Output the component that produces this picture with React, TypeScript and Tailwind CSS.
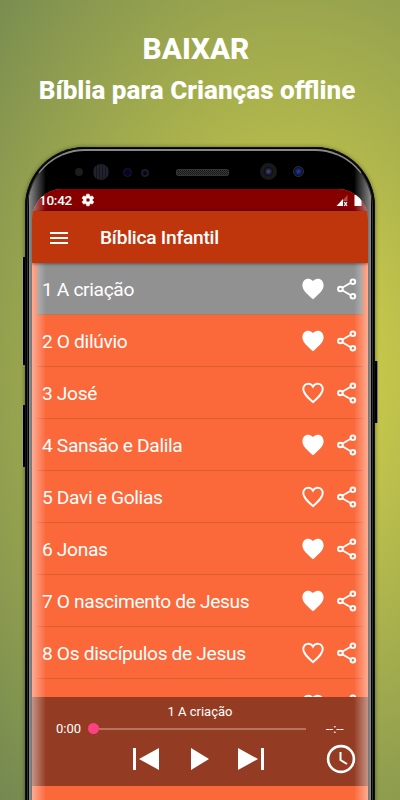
import { useState } from "react";

const stories = [
  { id: 1, title: "A criação", liked: true },
  { id: 2, title: "O dilúvio", liked: true },
  { id: 3, title: "José", liked: false },
  { id: 4, title: "Sansão e Dalila", liked: true },
  { id: 5, title: "Davi e Golias", liked: false },
  { id: 6, title: "Jonas", liked: true },
  { id: 7, title: "O nascimento de Jesus", liked: true },
  { id: 8, title: "Os discípulos de Jesus", liked: false },
  { id: 9, title: "", liked: false },
];

const HeartIcon = ({ filled }: { filled: boolean }) => (
  <svg width="22" height="22" viewBox="0 0 22 22" className="shrink-0">
    {filled ? (
      <path
        d="M11 21.300 9.400 19.900C3.600 14.700.4 11.700.4 7.300.4 3.400 3 .7 6.200.7c1.900 0 3.700.9 4.800 2.400C12.100 1.600 13.900.7 15.800.7c3.200 0 5.800 2.700 5.800 6.600 0 4.400-3.200 7.400-9 12.600L11 21.300z"
        fill="#fff"
      />
    ) : (
      <path
        d="M11 20.100 10 19.200C4.600 14.300 1.300 11.200 1.300 7.300c0-3.400 2.200-5.600 5-5.600 2 0 3.700 1 4.700 3 1-2 2.700-3 4.700-3 2.800 0 5 2.200 5 5.600 0 3.900-3.300 7-8.700 11.900L11 20.100z"
        fill="none"
        stroke="#fff"
        strokeWidth="1.900"
      />
    )}
  </svg>
);

const ShareIcon = () => (
  <svg width="20" height="22" viewBox="0 0 20 22" className="shrink-0" fill="none" stroke="#fff">
    <path d="M5.200 9.800 13.800 4.800M5.200 12.200 13.800 17.200" strokeWidth="1.900" />
    <circle cx="3.400" cy="11" r="2.300" strokeWidth="2" />
    <circle cx="15.900" cy="3.700" r="2.300" strokeWidth="2" />
    <circle cx="15.900" cy="18.300" r="2.300" strokeWidth="2" />
  </svg>
);

const StatusBar = () => (
  <div className="flex h-[22px] shrink-0 items-center border-b border-[#6b0000] bg-[#870000] pl-[7px] text-white">
    <span className="w-[34px] pt-[2px] text-[13.5px] font-medium leading-none tracking-[-0.250px]">10:42</span>
    <svg width="14" height="14" viewBox="0 0 24 24" className="ml-[8px]">
      <path
        d="M19.400 13a7.500 7.500 0 0 0 0-2l2.200-1.700c.2-.2.300-.4.100-.6l-2-3.500c-.1-.2-.4-.3-.6-.2l-2.600 1a7.700 7.700 0 0 0-1.700-1l-.4-2.600c0-.2-.2-.4-.5-.4h-4c-.3 0-.5.200-.5.400L9 5a7.700 7.700 0 0 0-1.700 1l-2.600-1c-.2-.1-.5 0-.6.200l-2 3.500c-.1.200-.1.400.1.600L4.400 11a7.500 7.500 0 0 0 0 2l-2.200 1.700c-.2.200-.3.400-.1.600l2 3.500c.1.200.4.300.6.200l2.600-1c.5.400 1.100.7 1.700 1l.4 2.600c0 .2.200.4.500.4h4c.3 0 .5-.2.500-.4l.4-2.600c.6-.3 1.200-.6 1.700-1l2.600 1c.2.100.5 0 .6-.2l2-3.500c.1-.2.100-.4-.1-.6L19.400 13zM12 15.500a3.500 3.500 0 1 1 0-7 3.500 3.500 0 0 1 0 7z"
        fill="#fff"
        fillRule="evenodd"
        stroke="#fff"
      />
    </svg>
    <svg width="28" height="14" viewBox="0 0 28 14" className="ml-auto mr-[4px]">
      <path d="M6.500 7.500 11.500 2v6h-5z" fill="#fff" fillOpacity=".3" />
      <path d="M.5 13 7 6v7H.500z" fill="#fff" />
      <path d="m8.200 9 2.800 4m0-4-2.800 4" stroke="#fff" strokeWidth="1.300" />
      <path d="M18.500 2h7v11h-7z" fill="#fff" />
    </svg>
  </div>
);

const AppBar = () => (
  <div className="relative z-10 flex h-[52px] shrink-0 items-center bg-[#bf360c] pl-[18px] pt-px shadow-[0_1px_3px_rgba(0,0,0,0.45)]">
    <div className="flex w-[18px] flex-col gap-[3px]">
      <div className="h-[2px] bg-white" />
      <div className="h-[2px] bg-white" />
      <div className="h-[2px] bg-white" />
    </div>
    <h1 className="ml-[32px] pt-px text-[19.2px] font-medium leading-none tracking-[-0.250px] text-white">
      Bíblica Infantil
    </h1>
  </div>
);

const Player = () => (
  <div className="absolute inset-x-0 bottom-[14px] h-[89px] bg-[#943c23] text-white">
    <p className="pt-[6px] text-center text-[13px] leading-[17px]">1 A criação</p>
    <div className="flex h-[17px] items-center pl-[24px] text-[13px]">
      <span className="w-[32px]">0:00</span>
      <span className="h-[11px] w-[11px] rounded-full bg-[#ff4081]" />
      <span className="h-[2px] w-[207px] bg-[#b4745f]" />
      <span className="ml-[20px] pt-px">--:--</span>
    </div>
    <div className="flex items-center pl-[101px] pt-[7px]">
      <svg width="27" height="30" viewBox="0 0 27 30" fill="#fff">
        <path d="M0 4h3v22H0zM26 4v22L6 15z" />
      </svg>
      <svg width="19" height="30" viewBox="0 0 19 30" fill="#fff" className="ml-[31px]">
        <path d="M0 4v22l18-11z" />
      </svg>
      <svg width="27" height="30" viewBox="0 0 27 30" fill="#fff" className="ml-[28px]">
        <path d="M0 4v22l20-11zM23 4h3v22h-3z" />
      </svg>
      <svg width="30" height="30" viewBox="0 0 30 30" fill="none" stroke="#fff" strokeWidth="2.600" className="ml-[61px]">
        <circle cx="15" cy="15" r="12.900" />
        <path d="M14.500 8v8l6.500 4" strokeWidth="2" />
      </svg>
    </div>
  </div>
);

const App = () => {
  const [current, setCurrent] = useState<number>(1);

  return (
    <div className="h-[800px] w-[400px] overflow-hidden bg-[radial-gradient(420px_600px_at_290px_375px,#dad649,#738851)] font-['Roboto',sans-serif]">
      <header className="flex h-[147px] flex-col items-center pt-[31px] font-extrabold text-white">
        <p className="pr-[8px] text-[29.800px] leading-[36px]">BAIXAR</p>
        <p className="pt-[6px] pr-[6px] text-[26.100px] leading-[34px]">Bíblia para Crianças offline</p>
      </header>

      <div className="relative mx-auto h-[720px] w-[350px] rounded-t-[60px] bg-black shadow-[0_0_4px_rgba(0,0,0,0.45)]">
        {/* side buttons */}
        <div className="absolute -left-[3px] top-[110px] h-[108px] w-[3px] border-l border-[#999] bg-black" />
        <div className="absolute -left-[3px] top-[258px] h-[62px] w-[3px] border-l border-[#999] bg-black" />
        <div className="absolute -right-[3px] top-[214px] h-[62px] w-[3px] border-r border-[#777] bg-black" />

        <div className="h-full rounded-t-[60px] border border-b-0 border-[#111] p-[1px] pb-0">
          <div className="relative h-full overflow-hidden rounded-t-[58px] border-x border-t-2 border-x-[#333] border-t-[#888] bg-black px-[4px]">
            {/* sensors */}
            <div className="relative h-[38px]">
              <div className="absolute left-[43px] top-[17px] h-[8px] w-[8px] rounded-full bg-[#1c1c1c]" />
              <div className="absolute left-[61px] top-[13px] h-[16px] w-[16px] rounded-full bg-[repeating-linear-gradient(90deg,#15151d_0_1px,#22222c_1px_3px)]" />
              <div className="absolute left-[91px] top-[17px] h-[9px] w-[9px] rounded-full border border-[#181828] bg-[#05052a]" />
              <div className="absolute left-[109px] top-[18px] h-[8px] w-[8px] rounded-full border-2 border-[#1a1a2c] bg-[#05050f]" />
              <div className="absolute left-[144px] top-[18px] h-[7px] w-[53px] rounded-[2px] border border-[#333] bg-[repeating-conic-gradient(#1a1a1a_0_25%,#383838_0_50%)] bg-[length:2px_2px]" />
              <div className="absolute left-[228px] top-[12px] h-[17px] w-[17px] rounded-full border-4 border-[#191919] bg-[radial-gradient(circle,#4a4a70,#07071a_70%)]" />
              <div className="absolute left-[261px] top-[15px] h-[11px] w-[11px] rounded-full border border-[#333] bg-[radial-gradient(circle,#26409a,#06062b_75%)]" />
            </div>

            <div className="relative flex h-[611px] flex-col overflow-hidden rounded-t-[30px] bg-[#fb683a]">
              <StatusBar />
              <AppBar />
              <ul className="px-[5px]">
                {stories.map((story) => (
                  <li
                    key={story.id}
                    onClick={() => setCurrent(story.id)}
                    className={`flex h-[52px] items-center border-b pl-[5px] pr-[6px] text-[19.2px] tracking-[-0.350px] text-white ${
                      current === story.id ? "border-[#b0785f] bg-[#919191]" : "border-[#dd5c34]"
                    }`}
                  >
                    <span className="flex-1 pt-[3px]">{story.title && `${story.id} ${story.title}`}</span>
                    <HeartIcon filled={story.liked} />
                    <span className="ml-[13px]">
                      <ShareIcon />
                    </span>
                  </li>
                ))}
              </ul>
              <Player />
            </div>

            {/* curved glass edges */}
            <div className="absolute inset-y-0 left-[1px] w-[17px] bg-linear-to-r from-white/55 to-transparent" />
            <div className="absolute inset-y-0 right-[1px] w-[17px] bg-linear-to-l from-white/55 to-transparent" />
          </div>
        </div>
      </div>
    </div>
  );
};

export default App;
